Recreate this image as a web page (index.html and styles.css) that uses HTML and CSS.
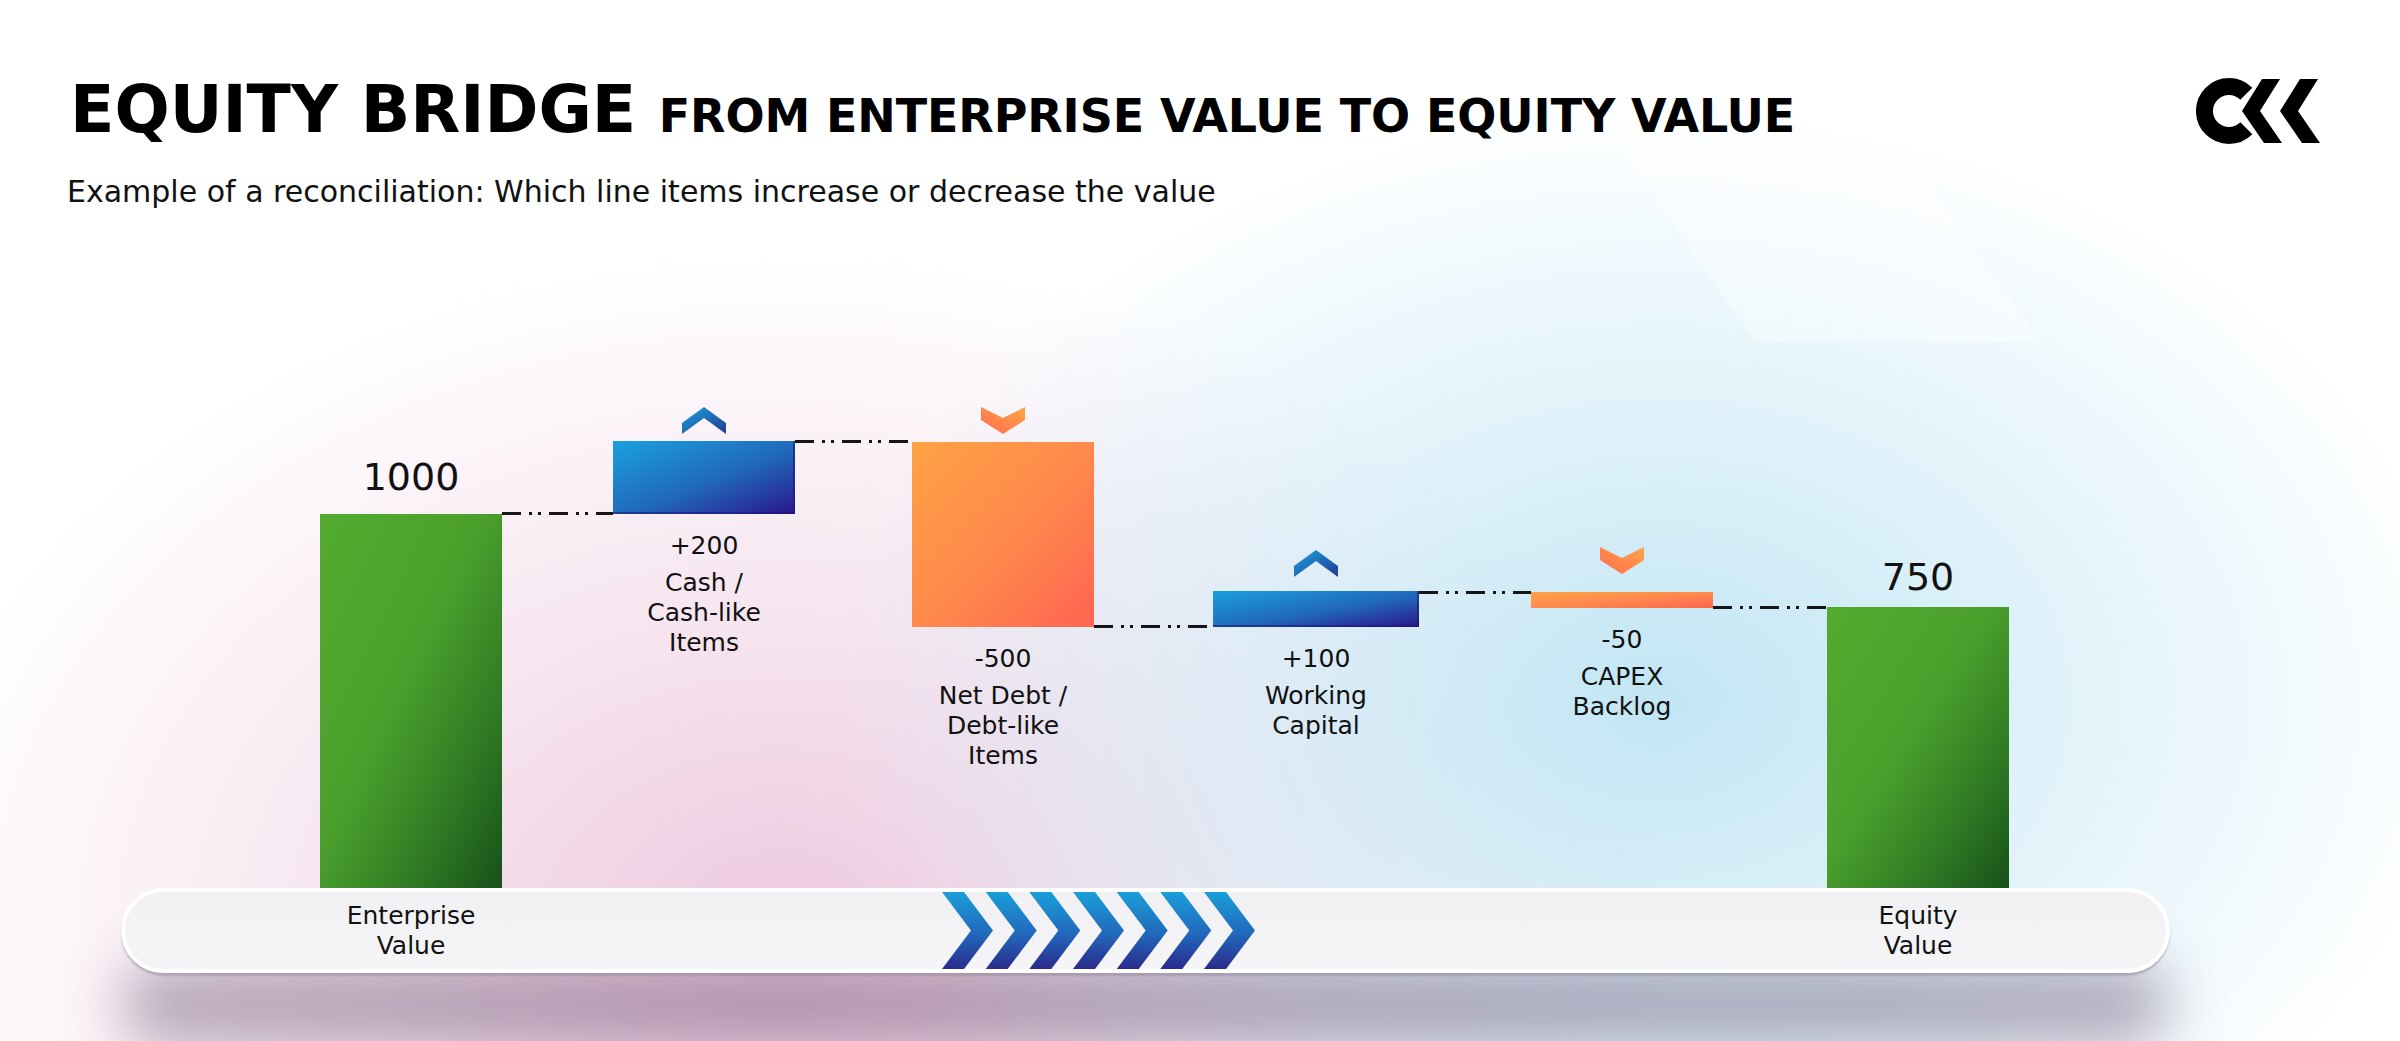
FILE: index.html
```html
<!DOCTYPE html>
<html lang="en">
<head>
<meta charset="utf-8">
<title>Equity Bridge</title>
<link rel="stylesheet" href="styles.css">
</head>
<body>
<svg class="defs" aria-hidden="true">
  <defs>
    <linearGradient id="gUp" x1="0" y1="0" x2="1" y2="1">
      <stop offset="0" stop-color="#1aa2dd"/>
      <stop offset="1" stop-color="#233a95"/>
    </linearGradient>
    <linearGradient id="gDown" x1="0" y1="1" x2="1" y2="0">
      <stop offset="0" stop-color="#ff6e4f"/>
      <stop offset="1" stop-color="#ffa346"/>
    </linearGradient>
    <linearGradient id="gArrow" x1="0" y1="0" x2="0" y2="1">
      <stop offset="0" stop-color="#1a9fd9"/>
      <stop offset="0.55" stop-color="#2168bb"/>
      <stop offset="1" stop-color="#2b2a8c"/>
    </linearGradient>
  </defs>
</svg>
<div class="slide">
  <div class="glare"></div>
  <header class="head">
    <div class="titles">
      <h1 class="title"><span class="title-main">EQUITY BRIDGE</span> <span class="title-sub">FROM ENTERPRISE VALUE TO EQUITY VALUE</span></h1>
      <p class="lead">Example of a reconciliation: Which line items increase or decrease the value</p>
    </div>
    <svg class="logo" viewBox="0 0 126 66" aria-label="logo">
      <path d="M50.3 15.7 A24.5 24.5 0 1 0 50.3 50.3" fill="none" stroke="#000" stroke-width="17"/>
      <polygon points="66,1 84,1 64,33 86,65 68,65 46,33" fill="#000" stroke="#fff" stroke-width="5" paint-order="stroke"/>
      <polygon points="104,1 122,1 102,33 124,65 106,65 84,33" fill="#000"/>
    </svg>
  </header>

  <section class="chart">
    <div class="col total" style="--label-top:55px;--label-gap:15px">
      <div class="total-val">1000</div>
      <div class="bar green"></div>
    </div>
    <div class="link" style="--y:112px"><span class="dash"></span></div>

    <div class="col delta" style="--mark:7px;--gap:7px;--h:73px">
      <svg class="mark" viewBox="0 0 44 27"><polygon points="22,0 44,16 44,27 22,11 0,27 0,16" fill="url(#gUp)"/></svg>
      <div class="bar blue"></div>
      <div class="val">+200</div>
      <div class="name">Cash /<br>Cash-like<br>Items</div>
    </div>
    <div class="link" style="--y:40px"><span class="dash"></span></div>

    <div class="col delta" style="--mark:7px;--gap:8px;--h:185px">
      <svg class="mark" viewBox="0 0 44 27"><polygon points="0,0 22,11 44,0 44,13 22,27 0,13" fill="url(#gDown)"/></svg>
      <div class="bar orange"></div>
      <div class="val">-500</div>
      <div class="name">Net Debt /<br>Debt-like<br>Items</div>
    </div>
    <div class="link" style="--y:225px"><span class="dash"></span></div>

    <div class="col delta" style="--mark:150px;--gap:14px;--h:36px">
      <svg class="mark" viewBox="0 0 44 27"><polygon points="22,0 44,16 44,27 22,11 0,27 0,16" fill="url(#gUp)"/></svg>
      <div class="bar blue"></div>
      <div class="val">+100</div>
      <div class="name">Working<br>Capital</div>
    </div>
    <div class="link" style="--y:191px"><span class="dash"></span></div>

    <div class="col delta" style="--mark:147px;--gap:18px;--h:16px">
      <svg class="mark" viewBox="0 0 44 27"><polygon points="0,0 22,11 44,0 44,13 22,27 0,13" fill="url(#gDown)"/></svg>
      <div class="bar orange"></div>
      <div class="val">-50</div>
      <div class="name">CAPEX<br>Backlog</div>
    </div>
    <div class="link" style="--y:206px"><span class="dash"></span></div>

    <div class="col total" style="--label-top:155px;--label-gap:8px">
      <div class="total-val">750</div>
      <div class="bar green"></div>
    </div>
  </section>

  <div class="pill">
    <div class="pill-label first">Enterprise<br>Value</div>
    <svg class="arrows" viewBox="0 0 313 77" preserveAspectRatio="none" aria-hidden="true">
      <polygon points="0,0 22,0 51,38.5 22,77 0,77 29,38.5" fill="url(#gArrow)"/>
      <polygon points="43.7,0 65.7,0 94.7,38.5 65.7,77 43.7,77 72.7,38.5" fill="url(#gArrow)"/>
      <polygon points="87.3,0 109.3,0 138.3,38.5 109.3,77 87.3,77 116.3,38.5" fill="url(#gArrow)"/>
      <polygon points="131,0 153,0 182,38.5 153,77 131,77 160,38.5" fill="url(#gArrow)"/>
      <polygon points="174.7,0 196.7,0 225.7,38.5 196.7,77 174.7,77 203.7,38.5" fill="url(#gArrow)"/>
      <polygon points="218.3,0 240.3,0 269.3,38.5 240.3,77 218.3,77 247.3,38.5" fill="url(#gArrow)"/>
      <polygon points="262,0 284,0 313,38.5 284,77 262,77 291,38.5" fill="url(#gArrow)"/>
    </svg>
    <div class="pill-label last">Equity<br>Value</div>
  </div>
</div>
</body>
</html>
```

FILE: styles.css
```css
body {
  margin: 0;
  background: #fff;
  font-family: "DejaVu Sans", Verdana, sans-serif;
  color: #111;
}

.defs {
  position: absolute;
  width: 0;
  height: 0;
  overflow: hidden;
}

.slide {
  position: relative;
  isolation: isolate;
  width: 2400px;
  height: 1041px;
  overflow: hidden;
  background:
    radial-gradient(ellipse 820px 600px at 1660px 700px, rgba(190, 228, 243, 0.95) 0%, rgba(202, 233, 246, 0.62) 45%, rgba(225, 242, 250, 0) 100%),
    radial-gradient(ellipse 900px 680px at 780px 930px, rgba(236, 198, 220, 0.95) 0%, rgba(240, 212, 228, 0.62) 45%, rgba(247, 232, 240, 0) 100%),
    #fff;
}

.glare {
  position: absolute;
  z-index: -1;
  left: 1552px;
  top: 0;
  width: 490px;
  height: 342px;
  background: rgba(255, 255, 255, 0.4);
  clip-path: polygon(0 50px, 279px 50px, 490px 342px, 203px 342px);
}

.head {
  height: 400px;
  box-sizing: border-box;
  padding: 78px 78px 0 67px;
  display: flex;
  justify-content: space-between;
  align-items: flex-start;
}

.title {
  margin: 0 0 0 3px;
  font-size: 65px;
  line-height: 64px;
  font-weight: 700;
  color: #000;
  white-space: nowrap;
}

.title-sub {
  font-size: 46px;
  margin-left: 0;
  letter-spacing: -0.1px;
}

.lead {
  margin: 27px 0 0;
  font-size: 30px;
  line-height: 34px;
  color: #111;
  white-space: nowrap;
}

.logo {
  width: 126px;
  height: 66px;
  flex: none;
}

.chart {
  display: grid;
  grid-template-columns: 182px 111px 182px 117px 182px 119px 206px 112px 182px 114px 182px;
  height: 488px;
  margin-left: 320px;
}

.col {
  display: flex;
  flex-direction: column;
  align-items: center;
}

.total-val {
  margin-top: var(--label-top);
  margin-bottom: var(--label-gap);
  font-size: 38px;
  line-height: 44px;
  color: #111;
}

.total .bar {
  flex: 1;
  align-self: stretch;
}

.delta .mark {
  width: 44px;
  height: 27px;
  margin-top: var(--mark);
  flex: none;
}

.delta .bar {
  align-self: stretch;
  height: var(--h);
  margin-top: var(--gap);
  flex: none;
}

.bar.green {
  background: linear-gradient(to bottom right, #53ab30 0%, #4aa02c 45%, #2f7a24 75%, #17501a 100%);
}

.bar.blue {
  background: linear-gradient(to bottom right, #1aa1dc 0%, #2168ba 55%, #2a168a 100%);
  box-shadow: inset -2px -2px 0 rgba(25, 20, 110, 0.55);
}

.bar.orange {
  background: linear-gradient(to bottom right, #ffa245 0%, #ff8a4c 50%, #ff6452 100%);
}

.val {
  margin-top: 17px;
  font-size: 25px;
  line-height: 30px;
}

.name {
  margin-top: 7px;
  font-size: 25px;
  line-height: 30px;
  text-align: center;
}

.dash {
  display: block;
  height: 3px;
  margin-top: var(--y);
  background: repeating-linear-gradient(to right,
    #151515 0 19px, transparent 19px 27px,
    #151515 27px 30px, transparent 30px 36px,
    #151515 36px 39px, transparent 39px 47px);
}

.pill {
  margin-left: 121px;
  width: 2049px;
  height: 85px;
  box-sizing: border-box;
  border: 4px solid #fff;
  border-radius: 43px;
  background: linear-gradient(#f1f1f4, #f5f5f7);
  box-shadow: 0 3px 2px rgba(120, 110, 130, 0.35), 0 74px 56px rgba(80, 55, 92, 0.38);
  display: flex;
  align-items: center;
}

.pill-label {
  flex: none;
  width: 182px;
  text-align: center;
  font-size: 25px;
  line-height: 30px;
  color: #111;
}

.pill-label.first {
  margin-left: 195px;
}

.arrows {
  flex: none;
  margin-left: 440px;
  width: 313px;
  height: 77px;
}

.pill-label.last {
  margin-left: 572px;
}
```
